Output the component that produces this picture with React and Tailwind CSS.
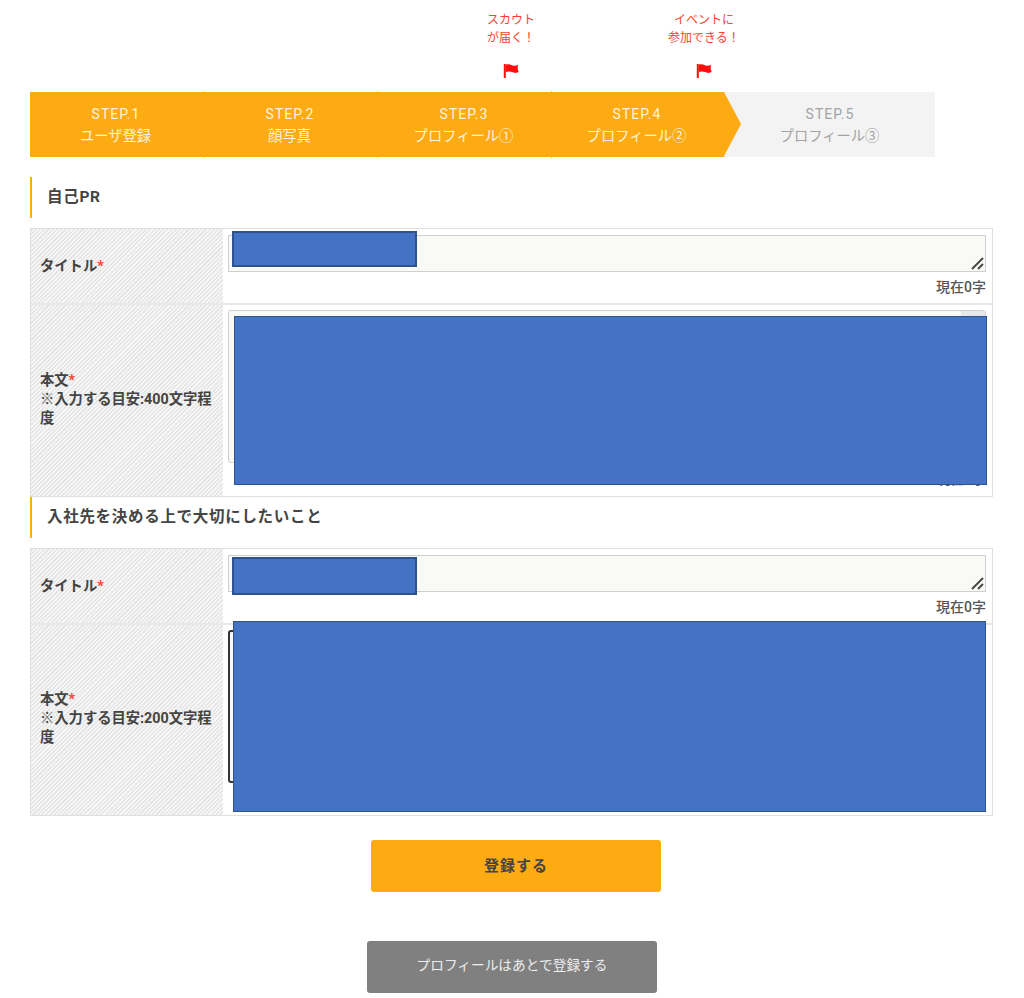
const font = "font-['Roboto','Noto_Sans_CJK_JP',sans-serif]";

const Flag = () => (
  <svg width="16" height="14" viewBox="0 0 16 14" className="block">
    <path d="M.8 0h2v14h-2z" fill="#ff0d0d" />
    <path d="M2.800.8C5-.2 7 .4 9 1.300c2 .8 3.800.6 6.200-.3-.5 1.800-.7 3-.3 4.600.2.900.5 1.800.8 2.500-2.300 1.100-4.700 1-6.700 0-2-.9-4.200-1-6.200 0z" fill="#ff0d0d" />
  </svg>
);

const Notice = ({ lines, className }) => (
  <div className={`absolute top-[11px] flex w-[100px] flex-col items-center ${className}`}>
    <p className="text-center text-xs leading-[18px] text-[#f4432f]">
      {lines[0]}
      <br />
      {lines[1]}
    </p>
    <div className="mt-[17px]">
      <Flag />
    </div>
  </div>
);

const Step = ({ no, name, active, width, arrow, tick }) => (
  <div
    className={`relative flex h-[65px] flex-col items-center justify-center pr-[2px] pt-[2px] leading-[21px] ${width} ${
      active ? "bg-[#fdab13] text-[#fdf3dd]" : "bg-[#f3f3f3] text-[#a3a3a3]"
    }`}
  >
    <span className="text-sm tracking-[1px]">{no}</span>
    <span className="mr-px mt-[2px] text-[14.300px]">{name}</span>
    {tick && (
      <>
        <span className="absolute -top-px right-0 h-px w-px bg-[#fdc760]" />
        <span className="absolute -bottom-px right-0 h-px w-px bg-[#fdc760]" />
      </>
    )}
    {arrow && (
      <span className="absolute left-full top-0 h-0 w-0 border-y-[32.500px] border-l-[17px] border-y-transparent border-l-[#fdab13]" />
    )}
  </div>
);

const Heading = ({ children, className }) => (
  <div className={`flex h-[41px] items-center border-l-2 border-[#fdab13] pl-[15px] text-[15.500px] font-bold tracking-[0.700px] text-[#444] ${className}`}>
    {children}
  </div>
);

const Label = ({ title, note, className }) => (
  <div className={`flex w-[192px] shrink-0 items-center bg-[repeating-linear-gradient(135deg,#e6e6e6_0,#e6e6e6_1.500px,#f6f6f6_1.500px,#f6f6f6_3px)] px-[9px] text-[14.300px] font-bold leading-[19px] text-[#444] ${className}`}>
    <p>
      {title}
      <span className="text-[#f4432f]">*</span>
      {note && (
        <>
          <br />
          {note}
        </>
      )}
    </p>
  </div>
);

const Cover = ({ className }) => (
  <div className={`absolute z-10 border-[#2f528f] bg-[#4472c4] ${className}`} />
);

const Grip = () => (
  <svg width="13" height="13" viewBox="0 0 13 13" className="absolute bottom-[1px] right-[1px]">
    <path d="M1 12 12 1M7 12l5-5" stroke="#444" strokeWidth="1.800" fill="none" />
  </svg>
);

const Count = ({ className }) => (
  <p className={`text-right text-sm font-medium leading-[18px] text-[#555] ${className}`}>現在0字</p>
);

const TitleRow = ({ coverClass }) => (
  <div className="flex h-[76px] border-b-2 border-[#e8e8e8]">
    <Label title="タイトル" />
    <div className="relative flex-1 pl-[5px] pr-[6px] pt-[6px]">
      <div className="relative h-[37px] border border-[#cfcfcf] bg-[#f9f9f5]">
        <Grip />
      </div>
      <Count className="mt-[6px]" />
      <Cover className={`left-[9px] w-[185px] border-2 ${coverClass}`} />
    </div>
  </div>
);

const BodyRow = ({ note, focused, coverClass }) => (
  <div className="flex flex-1">
    <Label title="本文" note={note} className="pb-[3px]" />
    <div className="relative flex-1 pl-[5px] pr-[6px] pt-[5px]">
      <div className={`relative h-[153px] rounded-[3px] bg-[#f9f9f5] ${focused ? "border-2 border-[#333]" : "border border-[#cfcfcf]"}`}>
        {!focused && <div className="absolute right-0 top-0 h-[6px] w-[24px] bg-[#e8e8e8]" />}
      </div>
      <Count className="mt-[7px]" />
      <Cover className={`border ${coverClass}`} />
    </div>
  </div>
);

const FormTable = ({ note, focused, titleCover, bodyCover, className }) => (
  <div className={`mt-[10px] flex w-[963px] flex-col border border-[#e0e0e0] ${className}`}>
    <TitleRow coverClass={titleCover} />
    <BodyRow note={note} focused={focused} coverClass={bodyCover} />
  </div>
);

export default function App() {
  return (
    <div className={`relative h-[998px] w-[1024px] overflow-hidden bg-white px-[30px] pt-[92px] ${font}`}>
      <Notice lines={["スカウト", "が届く！"]} className="left-[461px]" />
      <Notice lines={["イベントに", "参加できる！"]} className="left-[654px]" />

      <div className="flex w-[905px]">
        <Step no="STEP.1" name="ユーザ登録" active tick width="w-[174px]" />
        <Step no="STEP.2" name="顔写真" active tick width="w-[174px]" />
        <Step no="STEP.3" name="プロフィール①" active tick width="w-[174px]" />
        <Step no="STEP.4" name="プロフィール②" active arrow width="w-[172px] z-10" />
        <Step no="STEP.5" name="プロフィール③" width="flex-1 pl-[3px]" />
      </div>

      <Heading className="mt-5">自己PR</Heading>
      <FormTable
        note="※入力する目安:400文字程度"
        titleCover="top-[2px] h-[36px]"
        bodyCover="left-[11px] top-[11px] h-[169px] w-[753px]"
        className="h-[269px]"
      />

      <Heading>入社先を決める上で大切にしたいこと</Heading>
      <FormTable
        note="※入力する目安:200文字程度"
        focused
        titleCover="top-[8px] h-[38px]"
        bodyCover="left-[10px] -top-[4px] h-[191px] w-[753px]"
        className="h-[268px]"
      />

      <div className="flex flex-col">
        <button className="ml-[341px] mt-6 flex h-[52px] w-[290px] items-center justify-center rounded-[3px] bg-[#fdab13] text-[15px] font-bold tracking-[1px] text-[#444]">
          登録する
        </button>
        <button className="ml-[337px] mt-[49px] flex h-[52px] w-[290px] items-center justify-center rounded-[3px] bg-[#808080] pb-[3px] text-[13.700px] text-[#eee]">
          プロフィールはあとで登録する
        </button>
      </div>
    </div>
  );
}
